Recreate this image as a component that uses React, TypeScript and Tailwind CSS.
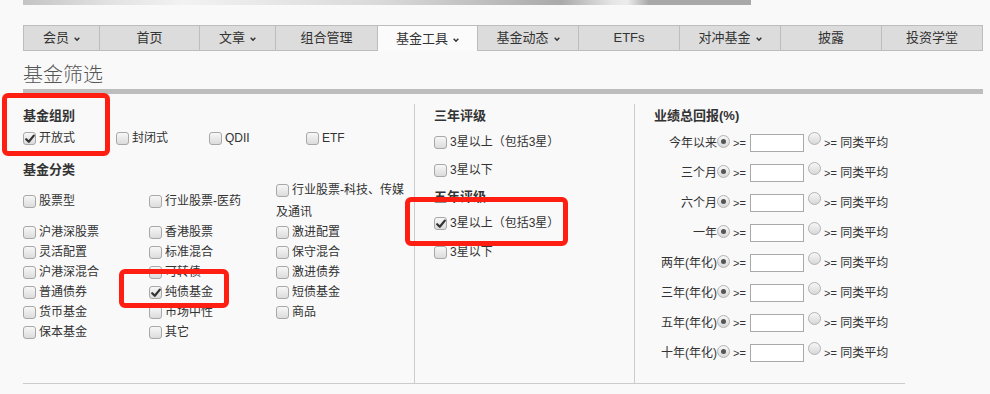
import React from "react";

const CB = ({ checked }: { checked?: boolean }) => (
  <span className="relative inline-block w-[13px] h-[13px] shrink-0 rounded-[3px] border border-[#a8a8a8] bg-[linear-gradient(#f7f7f7,#dcdcdc)] align-middle">
    {checked && (
      <svg className="absolute left-[1px] top-[1px]" width="10" height="10" viewBox="0 0 10 10">
        <path d="M1.2 5.2 L3.8 7.8 L8.8 1.6" stroke="#333" strokeWidth="2.2" fill="none" strokeLinecap="round" strokeLinejoin="round" />
      </svg>
    )}
  </span>
);

const Radio = ({ checked }: { checked?: boolean }) => (
  <span className="relative inline-flex items-center justify-center w-[13px] h-[13px] shrink-0 rounded-full border border-[#b3b3b3] bg-[linear-gradient(#f7f7f7,#d8d8d8)] mb-[4px]">
    {checked && <span className="block w-[5px] h-[5px] rounded-full bg-[#555]" />}
  </span>
);

const Item = ({ label, checked, w }: { label: string; checked?: boolean; w?: string }) => (
  <div className={`flex items-center gap-[3px] h-[20px] ${w ?? ""}`}>
    <CB checked={checked} />
    <span>{label}</span>
  </div>
);

const Chev = () => (
  <svg width="6" height="4" viewBox="0 0 6 4" className="ml-[5px] mt-[2px]">
    <path d="M0.7 0.8 L3 3.2 L5.3 0.8" stroke="#333" strokeWidth="1.5" fill="none" />
  </svg>
);

const tabs: { t: string; w: string; d?: boolean; a?: boolean }[] = [
  { t: "会员", w: "w-[76px]", d: true },
  { t: "首页", w: "w-[100px]" },
  { t: "文章", w: "w-[76px]", d: true },
  { t: "组合管理", w: "w-[102px]" },
  { t: "基金工具", w: "w-[100px]", d: true, a: true },
  { t: "基金动态", w: "w-[101px]", d: true },
  { t: "ETFs", w: "w-[101px]" },
  { t: "对冲基金", w: "w-[101px]", d: true },
  { t: "披露", w: "w-[101px]" },
  { t: "投资学堂", w: "w-[101px]" },
];

const perf = ["今年以来", "三个月", "六个月", "一年", "两年(年化)", "三年(年化)", "五年(年化)", "十年(年化)"];

const grid: [string, boolean?][][] = [
  [["股票型"], ["行业股票-医药"], ["行业股票-科技、传媒及通讯"]],
  [["沪港深股票"], ["香港股票"], ["激进配置"]],
  [["灵活配置"], ["标准混合"], ["保守混合"]],
  [["沪港深混合"], ["可转债"], ["激进债券"]],
  [["普通债券"], ["纯债基金", true], ["短债基金"]],
  [["货币基金"], ["市场中性"], ["商品"]],
  [["保本基金"], ["其它"]],
];

export default function App() {
  return (
    <div className="relative w-[990px] h-[394px] overflow-hidden bg-[#f9f9f9] text-[#333] text-[12px] font-['Liberation_Sans','Noto_Sans_CJK_SC',sans-serif]">
      <div className="pl-[23px]">
        <div className="w-[728px] h-[5px] bg-[linear-gradient(90deg,#c4c4c4_0%,#e2e2e2_12%,#f2f2f2_22%,#d8d8d8_50%,#aaaaaa_74%,#e6e6e6_81%,#ececec_83%,#a8a8a8_86%,#a8a8a8_100%)]" />

        <div className="mt-[20px] flex h-[26px] w-[960px] border-l border-[#bdbdbd]">
          {tabs.map((t) => (
            <div
              key={t.t}
              className={`${t.w} flex items-center justify-center border-r border-t border-[#bdbdbd] text-[13px] ${
                t.a ? "bg-[#fbfbfb]" : "bg-[#dcdcdc] border-b"
              }`}
            >
              <span>{t.t}</span>
              {t.d && <Chev />}
            </div>
          ))}
        </div>

        <div className="mt-[9px] h-[28px] leading-[28px] text-[20px] text-[#555] font-['Noto_Sans_CJK_SC',sans-serif] font-light">基金筛选</div>
        <div className="mt-[1px] h-[5px] w-[960px] bg-[#bdbdbd]" />

        <div className="mt-[10px] flex h-[280px] w-[882px] border-b border-[#cccccc]">
          {/* left */}
          <div className="w-[391px] pt-[2px]">
            <div className="h-[20px] leading-[20px] text-[13px] font-bold">基金组别</div>
            <div className="mt-[2px] flex">
              <Item label="开放式" checked w="w-[93px]" />
              <Item label="封闭式" w="w-[93px]" />
              <Item label="QDII" w="w-[97px]" />
              <Item label="ETF" />
            </div>
            <div className="mt-[12px] h-[20px] leading-[20px] text-[13px] font-bold">基金分类</div>
            <div className="grid grid-cols-[126px_127px_132px] items-center">
              {grid.map((row, ri) =>
                row.map(([label, checked], ci) =>
                  ri === 0 && ci === 2 ? (
                    <div key={`${ri}-${ci}`} className="h-[42px] overflow-hidden leading-[21px]">
                      <CB />
                      <span className="ml-[3px] align-middle">{label}</span>
                    </div>
                  ) : (
                    <Item key={`${ri}-${ci}`} label={label} checked={checked} />
                  )
                )
              )}
            </div>
          </div>

          {/* middle */}
          <div className="w-[220px] border-l border-[#cccccc] pl-[19px] pt-[2px]">
            <div className="h-[20px] leading-[20px] text-[13px] font-bold">三年评级</div>
            <div className="mt-[6px]"><Item label="3星以上（包括3星）" /></div>
            <div className="mt-[8px]"><Item label="3星以下" /></div>
            <div className="mt-[7px] h-[20px] leading-[20px] text-[13px] font-bold">五年评级</div>
            <div className="mt-[6px]"><Item label="3星以上（包括3星）" checked /></div>
            <div className="mt-[9px]"><Item label="3星以下" /></div>
          </div>

          {/* right */}
          <div className="flex-1 border-l border-[#cccccc] pl-[19px] pt-[2px]">
            <div className="h-[20px] leading-[20px] text-[13px] font-bold">业绩总回报(%)</div>
            <div className="mt-[2px]">
              {perf.map((p) => (
                <div key={p} className="flex h-[30px] items-center">
                  <span className="w-[63px] text-right">{p}</span>
                  <Radio checked />
                  <span className="ml-[3px] w-[17px] text-[11px]">&gt;=</span>
                  <input className="h-[18px] w-[54px] border border-[#a9a9a9] bg-white outline-none" />
                  <span className="ml-[4px]"><Radio /></span>
                  <span className="ml-[3px]"><span className="text-[11px]">&gt;=</span> 同类平均</span>
                </div>
              ))}
            </div>
          </div>
        </div>
      </div>

      {/* annotation boxes */}
      <div className="absolute left-[2px] top-[93px] h-[63px] w-[108px] rounded-[6px] border-[5px] border-[#ff1e12]" />
      <div className="absolute left-[119px] top-[269px] h-[39px] w-[110px] rounded-[6px] border-[5px] border-[#ff1e12]" />
      <div className="absolute left-[405px] top-[197px] h-[49px] w-[163px] rounded-[6px] border-[5px] border-[#ff1e12]" />
    </div>
  );
}
